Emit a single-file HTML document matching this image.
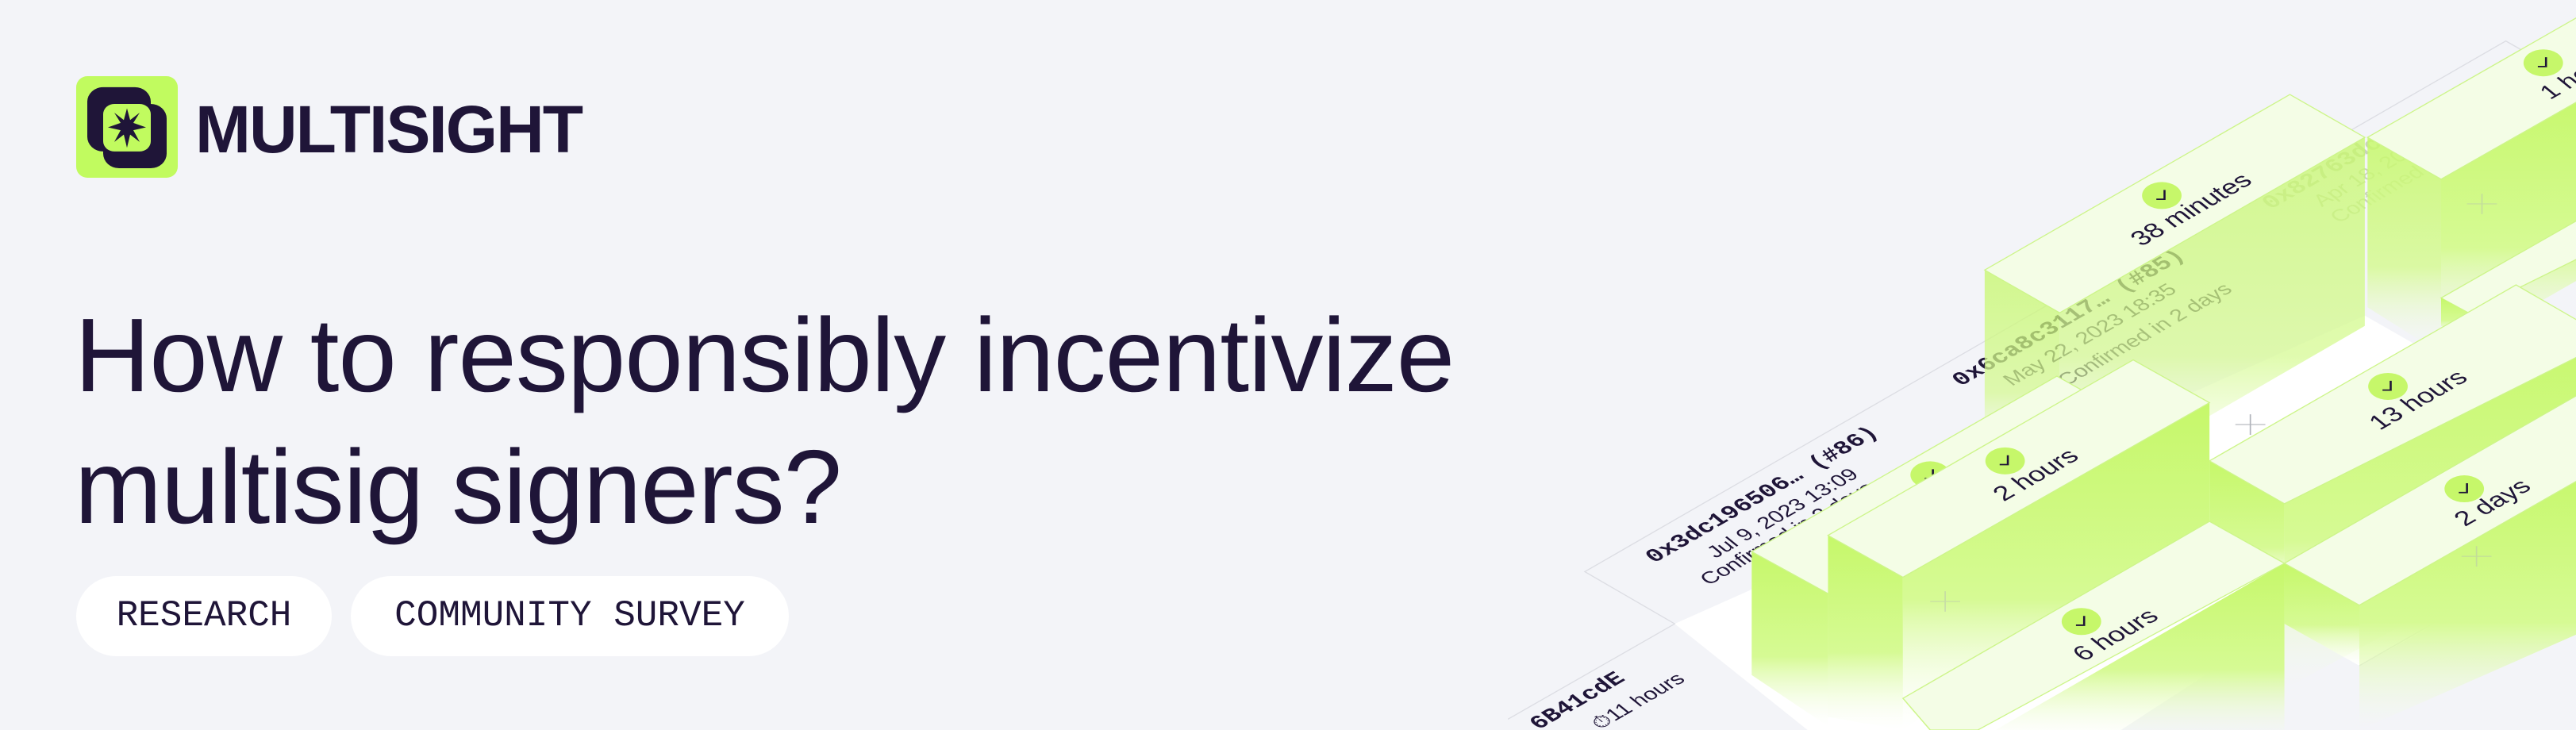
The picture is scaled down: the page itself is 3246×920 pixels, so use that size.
<!DOCTYPE html>
<html><head><meta charset="utf-8"><style>
html,body{margin:0;padding:0;width:3246px;height:920px;overflow:hidden}
body{background:#f3f4f8;position:relative;font-family:"Liberation Sans",sans-serif;color:#1f1538}
.logo{position:absolute;left:96px;top:96px;width:128px;height:128px;background:#c1fb5f;border-radius:14px}
.brand{position:absolute;left:246px;top:121px;font-size:84px;font-weight:700;letter-spacing:-2px;line-height:1}
h1{position:absolute;left:94px;top:365px;margin:0;font-weight:400;font-size:132px;line-height:166px;letter-spacing:-1px;white-space:nowrap}
.pill{position:absolute;top:726px;height:101px;border-radius:51px;background:#fff;font-family:"Liberation Mono",monospace;font-size:46px;line-height:101px;text-align:center}
svg.main{position:absolute;left:0;top:0}
</style></head><body>
<div class="logo">
<svg width="128" height="128" viewBox="0 0 128 139" preserveAspectRatio="none">
<rect x="14" y="15" width="80" height="88" rx="20" fill="#1f1538"/>
<rect x="34" y="38" width="80" height="88" rx="20" fill="#1f1538"/>
<rect x="34" y="38" width="60" height="65" rx="14" fill="#c1fb5f"/>
<polygon fill="#1f1538" points="64,44 68,60 80,50 72,64 88,70 72,74 80,90 68,80 64,98 60,80 48,90 56,74 40,70 56,64 48,50 60,60"/>
</svg></div>
<div class="brand">MULTISIGHT</div>
<h1>How to responsibly incentivize<br>multisig signers?</h1>
<div class="pill" style="left:96px;width:322px">RESEARCH</div>
<div class="pill" style="left:442px;width:552px">COMMUNITY SURVEY</div>

<svg class="main" width="3246" height="920" viewBox="0 0 3246 920">
<defs>
<linearGradient id="g" x1="0" y1="0" x2="0" y2="1"><stop offset="0" stop-color="#c6f86a"/><stop offset="0.6" stop-color="#d6fa94"/><stop offset="1" stop-color="#f5fde8" stop-opacity="0"/></linearGradient>
<g id="chk"><circle r="29" fill="#c6f76a"/><path d="M4,-12 V8 H-8" fill="none" stroke="#1f1538" stroke-width="3"/></g>
<clipPath id="cp"><rect x="0" y="0" width="1568" height="1568"/></clipPath>
</defs>
<g transform="translate(1900,0) scale(0.8584,0.5867)" clip-path="url(#cp)">
<polygon points="113,1228 1465,88 1620,218 1620,1140 245,1340" fill="#f3f4f8" stroke="#dcdde3" stroke-width="2"/>
<polygon points="245,1340 1258,678 1620,980 1620,1140 1250,1430 1140,1340 900,1568 440,1568" fill="#fff"/>
<polyline points="245,1340 0,1545" fill="none" stroke="#dcdde3" stroke-width="2"/>
<polyline points="1250,1430 1620,1120" fill="none" stroke="#dcdde3" stroke-width="2"/>
<g font-family="Liberation Mono,monospace" font-weight="700" font-size="40" fill="#1f1538">
<text transform="translate(215,1210) rotate(-40)">0x3dc196506… (#86)</text>
<text transform="translate(665,830) rotate(-40)">0x6ca8c3117… (#85)</text>
<text transform="translate(1120,450) rotate(-40)" fill="#c8d4b8">0x82763dc</text>
<text transform="translate(45,1568) rotate(-40)">6B41cdE</text>
</g>
<g font-family="Liberation Sans,sans-serif" font-size="36" fill="#1f1538">
<text transform="translate(305,1200) rotate(-40)">Jul 9, 2023 13:09</text>
<text transform="translate(295,1258) rotate(-40)">Confirmed in 2 days</text>
<text transform="translate(740,830) rotate(-40)">May 22, 2023 18:35</text>
<text transform="translate(820,830) rotate(-40)">Confirmed in 2 days</text>
<text transform="translate(1195,445) rotate(-40)" fill="#c8d4b8">Apr 18, 2023</text>
<text transform="translate(1220,480) rotate(-40)" fill="#c8d4b8">Confirmed</text>
<text transform="translate(135,1568) rotate(-40)">⏱11 hours</text>
</g>
<polygon points="1262,295 1370,385 1370,760 1262,660" fill="url(#g)" opacity="0.85"/>
<polygon points="1370,385 1620,175 1620,560 1370,770" fill="url(#g)"/>
<polygon points="1262,295 1600,12 1640,160 1370,385" fill="#f4fde6" stroke="#cdf58a" stroke-width="2"/>
<use href="#chk" x="1520" y="135"/>
<text transform="translate(1530,215) rotate(-40)" font-size="42" font-family="Liberation Sans,sans-serif" fill="#1f1538">1 hour</text>
<polygon points="1370,640 1568,475 1620,520 1410,672" fill="#f4fde6" stroke="#cdf58a" stroke-width="2"/>
<polygon points="1370,640 1410,672 1410,720 1370,700" fill="url(#g)"/>
<polygon points="700,580 810,672 810,1020 700,920" fill="url(#g)" opacity="0.75"/>
<polygon points="810,672 1258,295 1258,700 810,1080" fill="url(#g)" opacity="0.75"/>
<polygon points="700,580 1148,203 1258,295 810,672" fill="#f4fde6" stroke="#cdf58a" stroke-width="2"/>
<use href="#chk" x="960" y="420"/>
<text transform="translate(930,530) rotate(-40)" font-size="44" font-family="Liberation Sans,sans-serif" fill="#1f1538">38 minutes</text>
<polygon points="1030,990 1140,1082 1140,1300 1030,1200" fill="url(#g)"/>
<polygon points="1140,1082 1620,680 1620,1100 1140,1480" fill="url(#g)"/>
<polygon points="1030,990 1480,612 1620,730 1140,1082" fill="#f4fde6" stroke="#cdf58a" stroke-width="2"/>
<use href="#chk" x="1292" y="830"/>
<text transform="translate(1280,925) rotate(-40)" font-size="44" font-family="Liberation Sans,sans-serif" fill="#1f1538">13 hours</text>
<polygon points="1140,1210 1250,1300 1250,1430 1140,1340" fill="url(#g)"/>
<polygon points="1250,1300 1620,990 1620,1330 1250,1568" fill="url(#g)"/>
<polygon points="1140,1210 1590,832 1700,924 1250,1300" fill="#f4fde6" stroke="#cdf58a" stroke-width="2"/>
<use href="#chk" x="1404" y="1050"/>
<text transform="translate(1405,1132) rotate(-40)" font-size="44" font-family="Liberation Sans,sans-serif" fill="#1f1538">2 days</text>
<polygon points="358,1185 470,1275 470,1560 358,1450" fill="url(#g)"/>
<polygon points="358,1185 806,808 918,900 470,1275" fill="#f4fde6" stroke="#cdf58a" stroke-width="2"/>
<use href="#chk" x="620" y="1020"/>
<polygon points="470,1150 580,1240 580,1568 470,1540" fill="url(#g)"/>
<polygon points="580,1240 1030,865 1030,1120 580,1568" fill="url(#g)"/>
<polygon points="470,1150 918,773 1030,865 580,1240" fill="#f4fde6" stroke="#cdf58a" stroke-width="2"/>
<use href="#chk" x="730" y="990"/>
<text transform="translate(728,1078) rotate(-40)" font-size="44" font-family="Liberation Sans,sans-serif" fill="#1f1538">2 hours</text>
<polygon points="690,1590 1140,1210 1140,1568 690,1568" fill="url(#g)"/>
<polygon points="580,1500 1030,1120 1140,1210 690,1568 620,1568" fill="#f4fde6" stroke="#cdf58a" stroke-width="2"/>
<use href="#chk" x="842" y="1335"/>
<text transform="translate(845,1422) rotate(-40)" font-size="44" font-family="Liberation Sans,sans-serif" fill="#1f1538">6 hours</text>
<g stroke="#b0b3ba" stroke-width="2">
<path d="M1068,912h44M1090,890v44"/><path d="M1408,438h44M1430,416v44" opacity="0.4"/><path d="M1400,1195h44M1422,1173v44" opacity="0.4"/><path d="M620,1292h44M642,1270v44" opacity="0.4"/>
</g>
</g>
</svg>
</body></html>
